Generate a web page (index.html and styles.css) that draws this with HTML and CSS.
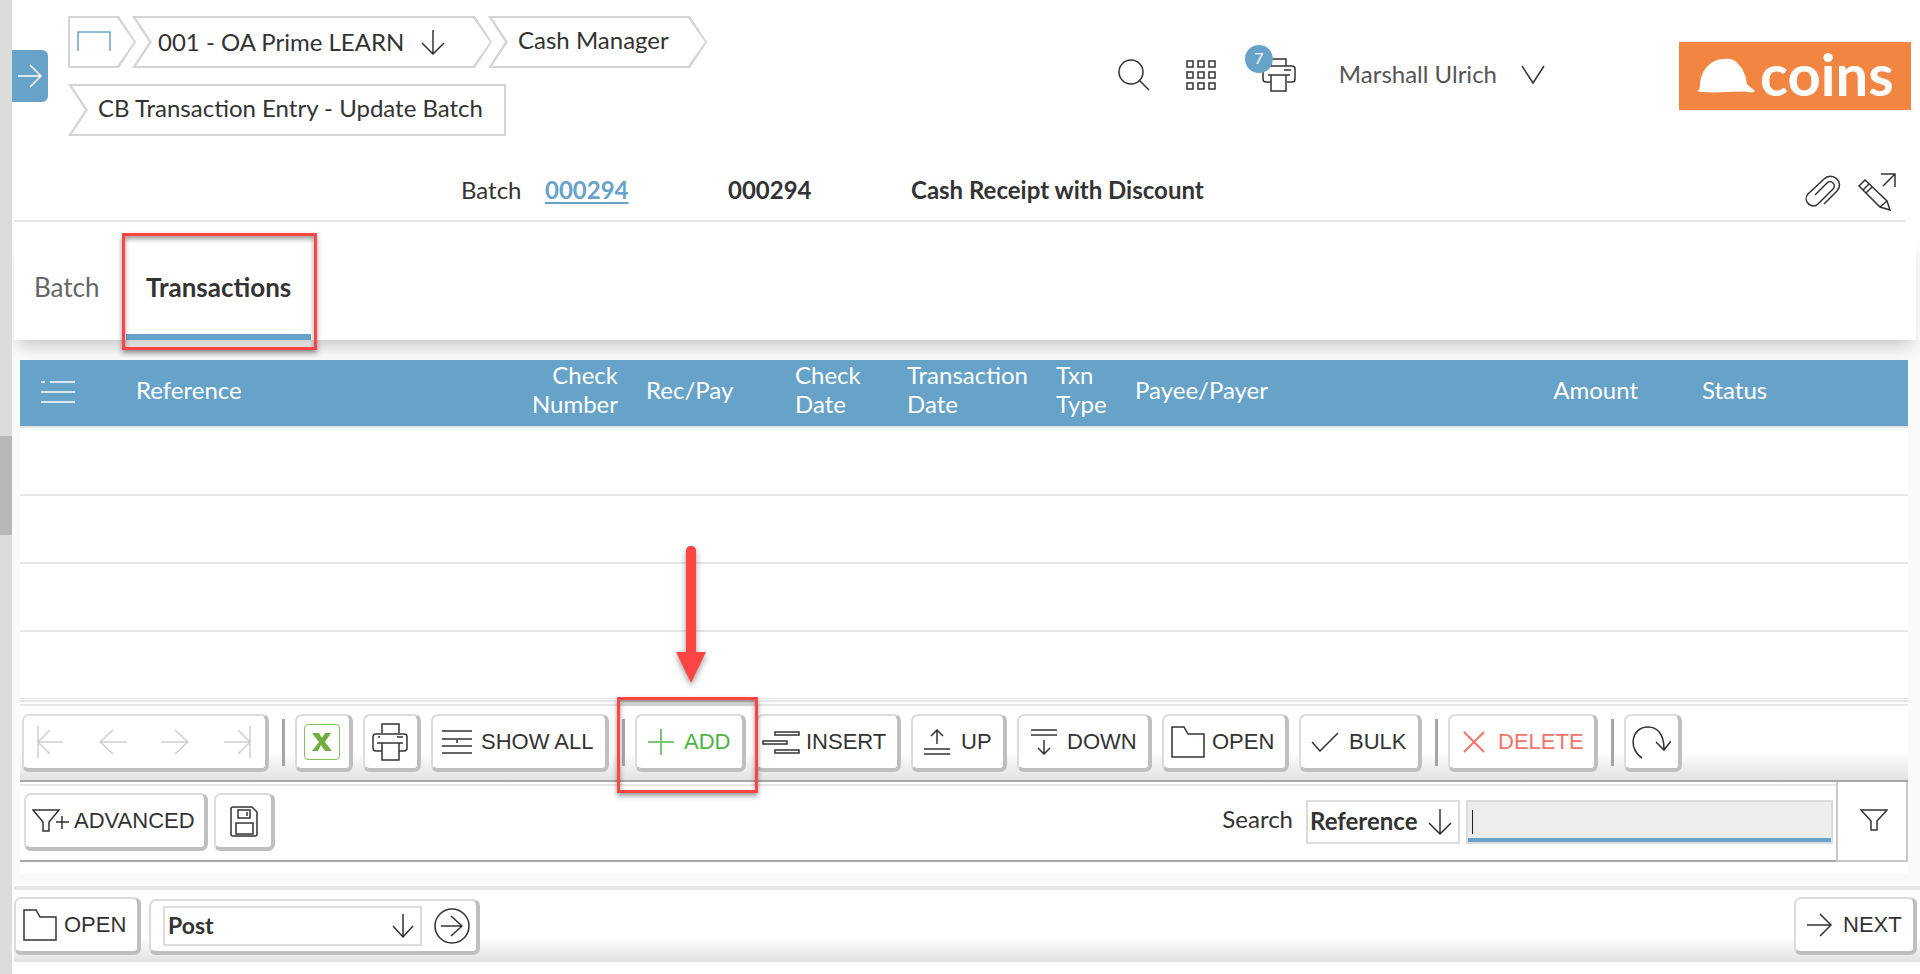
FILE: index.html
```html
<!DOCTYPE html>
<html lang="en">
<head>
<meta charset="utf-8">
<title>CB Transaction Entry - Update Batch</title>
<link rel="stylesheet" href="styles.css">
</head>
<body>
<div class="rail"><div class="rail-thumb"></div></div>
<div class="page">
  <header class="top">
    <button class="side-toggle" aria-label="Expand menu"><svg width="26" height="32" viewBox="0 0 26 32"><path d="M1 16H24M13 5L24 16L13 27"/></svg></button>
    <nav class="crumbs" aria-label="Breadcrumb">
      <a class="crumb crumb-home" href="#" aria-label="Home"><svg width="34" height="24" viewBox="0 0 34 24"><path d="M1 21V2H33V21"/></svg></a>
      <a class="crumb crumb-mid crumb-company" href="#">001 - OA Prime LEARN <svg width="24" height="26" viewBox="0 0 24 26"><path d="M12 1V25M1 14L12 25L23 14"/></svg></a>
      <a class="crumb crumb-mid crumb-module" href="#">Cash Manager</a>
      <a class="crumb crumb-last" href="#">CB Transaction Entry - Update Batch</a>
    </nav>
    <div class="tools">
      <button class="plain" aria-label="Search"><svg width="34" height="34" viewBox="0 0 34 34"><circle cx="14" cy="14" r="12"/><path d="M22 22L32 32"/></svg></button>
      <button class="plain" aria-label="Apps"><svg width="32" height="32" viewBox="0 0 32 32"><path d="M2 2h6v6h-6zM13 2h6v6h-6zM24 2h6v6h-6zM2 13h6v6h-6zM13 13h6v6h-6zM24 13h6v6h-6zM2 24h6v6h-6zM13 24h6v6h-6zM24 24h6v6h-6z"/></svg></button>
      <button class="plain printer" aria-label="Print queue"><svg width="36" height="36" viewBox="0 0 36 36"><path d="M10 9V2H25V9M10 25H5Q2 25 2 22V12Q2 9 5 9H31Q34 9 34 12V22Q34 25 31 25H26M7 18H29M10 18V34H25V18M23 13H30"/></svg><span class="badge">7</span></button>
      <button class="plain user"><span class="user-name">Marshall Ulrich</span><svg width="24" height="20" viewBox="0 0 24 20"><path d="M1 1L12 18L23 1"/></svg></button>
      <div class="logo"><svg width="58" height="36" viewBox="0 0 58 36"><path d="M0 33C2 32 3 31 3 26C4 12 14 1 27 1C33 0 39 2 41 6C44 9 45 10 46 13C49 18 49 21 50 26C52 29 57 31 58 33C56 35 53 34 48 33.500L28 34C20 34.500 6 35 0 33Z"/></svg><span>coins</span></div>
    </div>
  </header>

  <section class="summary">
    <span class="summary-label">Batch</span>
    <a class="summary-link" href="#">000294</a>
    <strong class="summary-no">000294</strong>
    <strong class="summary-desc">Cash Receipt with Discount</strong>
    <span class="summary-icons">
      <button class="plain" aria-label="Attachments"><svg width="38" height="36" viewBox="0 0 38 36"><path d="M11 21L23 9C27 5 33 11 29 15L14 30C8 36 -2 27 4 20L20 5C28 -3 41 8 33 17L20 30"/></svg></button>
      <button class="plain" aria-label="Edit"><svg width="40" height="40" viewBox="0 0 40 40"><path d="M2 14L8 8L30 29L33 38L23 35L2 14ZM6 18L12 12M9 21L15 15M23 35L30 29M26 14L38 2M24 2H38V15"/></svg></button>
    </span>
  </section>

  <nav class="tabs">
    <button class="tab">Batch</button>
    <button class="tab tab-on">Transactions<span class="mark mark-tab"></span></button>
  </nav>

  <main class="panel">
    <table class="grid">
      <colgroup><col class="c-menu"><col class="c-ref"><col class="c-num"><col class="c-rec"><col class="c-cdate"><col class="c-tdate"><col class="c-txn"><col class="c-payee"><col class="c-amt"><col class="c-status"></colgroup>
      <thead><tr>
        <th aria-label="Menu"><svg class="list-icon" width="36" height="24" viewBox="0 0 36 24"><path d="M1 2H5M10 2H35M1 12H35M1 22H35"/></svg></th>
        <th>Reference</th><th class="right">Check Number</th><th>Rec/Pay</th><th>Check Date</th><th>Transaction Date</th><th>Txn Type</th><th>Payee/Payer</th><th class="right">Amount</th><th class="status">Status</th>
      </tr></thead>
      <tbody>
        <tr><td colspan="10"></td></tr>
        <tr><td colspan="10"></td></tr>
        <tr><td colspan="10"></td></tr>
        <tr><td colspan="10"></td></tr>
      </tbody>
    </table>

    <div class="toolbar">
      <div class="btn nav-group">
        <button class="plain" aria-label="First" disabled><svg width="28" height="34" viewBox="0 0 28 34"><path d="M2 1V33M27 17H2M14 5L2 17L14 29"/></svg></button>
        <button class="plain" aria-label="Previous" disabled><svg width="28" height="34" viewBox="0 0 28 34"><path d="M28 17H1M14 5L1 17L14 29"/></svg></button>
        <button class="plain" aria-label="Next" disabled><svg width="28" height="34" viewBox="0 0 28 34"><path d="M0 17H27M14 5L27 17L14 29"/></svg></button>
        <button class="plain" aria-label="Last" disabled><svg width="28" height="34" viewBox="0 0 28 34"><path d="M26 1V33M0 17H26M14 5L26 17L14 29"/></svg></button>
      </div>
      <span class="sep"></span>
      <button class="btn icon-btn excel" aria-label="Export to Excel"><span class="excel-box"><svg width="20" height="18" viewBox="0 0 20 18"><path d="M0 0H7L10 5L13 0H19L13 9L20 18H13L9 12L6 18H0L7 9Z"/></svg></span></button>
      <button class="btn icon-btn" aria-label="Print"><svg width="36" height="38" viewBox="0 0 36 38"><path d="M10 10V1H27V10M10 28H4Q1 28 1 25V14Q1 11 4 11H32Q35 11 35 14V25Q35 28 32 28H27M5 20H31M10 20V37H27V20M25 14H31M6 14H8"/></svg></button>
      <button class="btn b-show"><svg width="30" height="26" viewBox="0 0 30 26"><path d="M0 2H30M0 10H30M0 17H30M0 24H30M15 11V14"/></svg>SHOW ALL</button>
      <span class="sep"></span>
      <button class="btn b-add"><svg width="26" height="26" viewBox="0 0 26 26"><path d="M0 13H26M13 0V26"/></svg>ADD<span class="mark mark-add"></span><svg class="pointer" width="34" height="142" viewBox="0 0 34 142"><path d="M12 5Q12 0 17 0Q22 0 22 5V106H32L17 137L2 106H12Z"/></svg></button>
      <button class="btn b-insert"><svg width="38" height="24" viewBox="0 0 38 24"><path d="M13 2H37V5H13ZM1 11H25V14H1ZM13 20H37V23H13Z"/></svg>INSERT</button>
      <button class="btn b-up"><svg width="28" height="26" viewBox="0 0 28 26"><path d="M14 15V1M8 7L14 1L20 7M1 20H27M1 25H27"/></svg>UP</button>
      <button class="btn b-down"><svg width="28" height="26" viewBox="0 0 28 26"><path d="M14 11V25M8 19L14 25L20 19M1 1H27M1 6H27"/></svg>DOWN</button>
      <button class="btn b-open"><svg width="34" height="32" viewBox="0 0 34 32"><path d="M1 1H13L17 8H33V31H1Z"/></svg>OPEN</button>
      <button class="btn b-bulk"><svg width="28" height="20" viewBox="0 0 28 20"><path d="M1 10L9 19L27 1"/></svg>BULK</button>
      <span class="sep"></span>
      <button class="btn b-delete"><svg width="22" height="22" viewBox="0 0 22 22"><path d="M1 1L21 21M21 1L1 21"/></svg>DELETE</button>
      <span class="sep"></span>
      <button class="btn icon-btn" aria-label="Refresh"><svg width="40" height="34" viewBox="0 0 40 34"><path d="M11 33C-3 24 0 2 17 2C27 2 33 10 33 24M25 17L33 25L40 16"/></svg></button>
    </div>

    <div class="filter-row">
      <div class="filter-main">
        <button class="btn b-adv"><svg width="37" height="24" viewBox="0 0 37 24"><path d="M1 1H27L17 13V22H11V13ZM24 13H37M30 7V20"/></svg>ADVANCED</button>
        <button class="btn b-save" aria-label="Save"><svg width="28" height="31" viewBox="0 0 28 31"><path d="M3 1H22L27 6V28Q27 30 25 30H3Q1 30 1 28V3Q1 1 3 1ZM8 4H20V12H8ZM17 6V10M6 17H23V28H6Z"/></svg></button>
        <label class="search-label" for="field">Search</label>
        <span class="select-wrap"><select id="field" class="field-select"><option>Reference</option></select><svg width="24" height="26" viewBox="0 0 24 26"><path d="M12 0V25M1 14L12 25L23 14"/></svg></span>
        <span class="search-box"><input class="search-input" type="text" aria-label="Search text"><span class="caret"></span></span>
      </div>
      <button class="filter-btn" aria-label="Filter"><svg width="28" height="22" viewBox="0 0 28 22"><path d="M1 1H27L17 12V21H11V12Z"/></svg></button>
    </div>
    <div class="panel-end"></div>
  </main>

  <footer class="footer">
    <button class="btn b-open"><svg width="34" height="32" viewBox="0 0 34 32"><path d="M1 1H13L17 8H33V31H1Z"/></svg>OPEN</button>
    <div class="btn action-group">
      <span class="select-wrap"><select class="action-select" aria-label="Action"><option>Post</option></select><svg width="22" height="24" viewBox="0 0 22 24"><path d="M11 0V23M1 12L11 23L21 12"/></svg></span>
      <button class="plain" aria-label="Go"><svg width="38" height="38" viewBox="0 0 38 38"><circle cx="19" cy="19" r="17"/><path d="M8 19H29M18 9L29 19L18 29"/></svg></button>
    </div>
    <button class="btn b-next"><svg width="26" height="24" viewBox="0 0 26 24"><path d="M0 12H24M13 1L24 12L13 23"/></svg>NEXT</button>
  </footer>
</div>
</body>
</html>
```
FILE: styles.css
```css
* { box-sizing: border-box; }
body {
  margin: 0;
  min-height: 100vh;
  display: flex;
  font-family: Lato, Carlito, sans-serif;
  font-size: 24px;
  line-height: 28px;
  color: #333;
  background: #fff;
}
svg { fill: none; stroke: #333; stroke-width: 1.5; flex: none; }
button, select, input { font: inherit; color: inherit; margin: 0; }
a { color: inherit; text-decoration: none; }
.plain { border: 0; padding: 0; background: none; display: flex; align-items: center; }

.rail { width: 12px; flex: none; background: #dcdcdc; padding-top: 436px; }
.rail-thumb { height: 99px; background: #b8b8b8; }
.page { flex: 1; min-width: 0; display: flex; flex-direction: column; }

.top { display: flex; align-items: flex-start; height: 152px; }
.side-toggle {
  width: 36px; height: 52px; margin-top: 50px; padding: 0;
  border: 0; border-radius: 0 6px 6px 0; background: #67a2c8;
  display: flex; align-items: center; justify-content: center;
}
.side-toggle svg { stroke: #fff; }
.crumbs { width: 680px; margin: 16px 0 0 20px; display: flex; flex-wrap: wrap; row-gap: 16px; }
.crumb {
  position: relative; height: 52px; margin-right: -4px;
  display: flex; align-items: center; background: #d4d4d4; isolation: isolate;
}
.crumb::before { content: ""; position: absolute; inset: 2px; background: #fff; z-index: -1; }
.crumb-home { width: 68px; padding-left: 9px; }
.crumb-home svg { stroke: #67a2c8; }
.crumb-home, .crumb-home::before { clip-path: polygon(0 0, calc(100% - 17px) 0, 100% 50%, calc(100% - 17px) 100%, 0 100%); }
.crumb-mid { clip-path: polygon(0 0, calc(100% - 17px) 0, 100% 50%, calc(100% - 17px) 100%, 0 100%, 17px 50%); }
.crumb-mid::before { clip-path: polygon(2px 0, calc(100% - 17px) 0, 100% 50%, calc(100% - 17px) 100%, 2px 100%, 18px 50%); }
.crumb-last { clip-path: polygon(0 0, 100% 0, 100% 100%, 0 100%, 17px 50%); }
.crumb-last::before { clip-path: polygon(2px 0, 100% 0, 100% 100%, 2px 100%, 18px 50%); }
.crumb-company { width: 360px; padding-left: 26px; gap: 17px; }
.crumb-module { width: 219px; padding-left: 30px; padding-bottom: 4px; }
.crumb-last { width: 438px; padding-left: 30px; padding-bottom: 4px; }

.tools { margin-left: auto; padding: 42px 9px 0 0; display: flex; align-items: center; color: #555; }
.tools > .plain { margin-right: 34px; padding-bottom: 2px; }
.tools > .printer { position: relative; margin-left: 10px; }
.badge {
  position: absolute; left: -16px; top: -12px; width: 28px; height: 28px;
  border-radius: 50%; background: #67a2c8; color: #fff;
  font-size: 16px; line-height: 26px; text-align: center;
}
.tools > .user { gap: 24px; margin: 0 134px 0 8px; }
.user-name { padding-bottom: 2px; }
.logo { width: 232px; height: 68px; padding-left: 18px; background: #f38542; color: #fff; display: flex; align-items: center; gap: 5px; }
.logo svg { fill: #fff; stroke: none; }
.logo span { font-size: 58px; line-height: 60px; font-weight: 700; padding-bottom: 4px; }

.summary { margin: 0 15px 0 2px; height: 70px; border-bottom: 2px solid #e6e6e6; display: flex; align-items: center; padding-left: 447px; padding-top: 8px; }
.summary-label { width: 84px; }
.summary-link { width: 183px; font-weight: 700; color: #67a2c8; text-decoration: underline; text-underline-offset: 3px; }
.summary-no { width: 183px; }
.summary-icons { margin-left: auto; display: flex; gap: 15px; padding: 4px 8px 0 0; }

.tabs { position: relative; z-index: 1; background: #fff; display: flex; height: 104px; margin: 14px 4px 0 2px; box-shadow: 0 10px 16px -4px rgba(0,0,0,.2); clip-path: inset(-8px -4px -20px -2px); }
.tab { border: 0; background: none; font-size: 26px; color: #666; padding: 0 20px 2px; width: 112px; text-align: left; }
.tab-on { position: relative; width: 185px; color: #333; font-weight: 700; border-bottom: 6px solid #67a2c8; padding-top: 6px; }
.mark { position: absolute; border: 3px solid #ff4444; box-shadow: 0 3px 5px rgba(0,0,0,.4), inset 0 3px 5px rgba(0,0,0,.4); pointer-events: none; z-index: 2; }
.mark-tab { left: -4px; right: -6px; top: -3px; bottom: -16px; }

.panel { padding: 20px 12px 12px 8px; background: #fafafa; }
.panel-end { height: 12px; background: #fff; }
.grid { width: 100%; border-collapse: separate; border-spacing: 0; table-layout: fixed; background: #fff; }
.grid thead { background: #67a2c8; color: #fff; }
.grid th { height: 66px; padding: 0 14px 8px; font-weight: 400; text-align: left; line-height: 29px; }
.grid th.right { text-align: right; }
.grid th.status { padding-left: 50px; }
.grid td { height: 68px; padding: 0; border-top: 2px solid #e6e6e6; }
.list-icon { stroke: #fff; margin: 6px 0 0 6px; display: block; }
.c-menu { width: 102px; } .c-ref { width: 369px; } .c-num { width: 141px; } .c-rec { width: 149px; }
.c-cdate { width: 112px; } .c-tdate { width: 149px; } .c-txn { width: 79px; } .c-amt { width: 152px; } .c-status { width: 256px; }

.btn {
  height: 58px; border: 2px solid #dcdcdc; border-right: 4px solid #bfbfbf; border-bottom: 4px solid #bfbfbf;
  border-radius: 7px; background: #fff; padding: 0; flex: none; white-space: nowrap;
  display: flex; align-items: center; font-family: "Liberation Sans", Arial, sans-serif; font-size: 22px;
}
.toolbar {
  display: flex; align-items: center; gap: 10px; padding: 14px 2px 8px; height: 84px;
  border-top: 1px solid #e6e6e6; border-bottom: 2px solid #a6a6a6;
  background:
    linear-gradient(#e6e6e6, #e6e6e6) 0 1px / 100% 2px no-repeat,
    linear-gradient(#e6e6e6, #e6e6e6) 0 5px / 100% 2px no-repeat,
    linear-gradient(#fff 65%, #e2e2e2);
}
.sep { width: 3px; height: 47px; background: #a6a6a6; margin-left: 3px; }
.nav-group { width: 247px; padding: 0 13px 0 12px; justify-content: space-between; }
.nav-group svg { stroke: #d0d0d0; }
.icon-btn { width: 58px; padding-right: 3px; justify-content: center; }
.excel-box { width: 36px; height: 36px; border: 1px solid #84bf5a; border-radius: 4px; display: flex; align-items: center; justify-content: center; }
.excel-box svg { fill: #70ad3f; stroke: none; }
.b-show { width: 178px; padding-left: 9px; gap: 9px; }
.b-add { position: relative; width: 111px; padding-left: 11px; gap: 10px; color: #4db445; }
.b-add svg { stroke: #7cc576; stroke-width: 2; }
.mark-add { left: -20px; right: -16px; top: -19px; bottom: -25px; }
.b-add .pointer { position: absolute; left: 37px; top: -170px; fill: #ff4444; stroke: none; filter: drop-shadow(0 3px 3px rgba(0,0,0,.4)); z-index: 2; }
.b-insert { width: 145px; padding-left: 4px; gap: 6px; }
.b-up { width: 96px; padding-left: 10px; gap: 10px; }
.b-down { width: 135px; padding-left: 11px; gap: 9px; }
.b-open { width: 127px; padding-left: 7px; gap: 7px; }
.b-bulk { width: 123px; padding-left: 10px; gap: 10px; }
.b-delete { width: 150px; padding-left: 13px; gap: 13px; color: #f4736b; }
.b-delete svg { stroke: #f4736b; stroke-width: 2; }

.filter-row { display: flex; height: 80px; background: #fff; }
.filter-main {
  flex: 1; display: flex; align-items: center; border-bottom: 2px solid #a6a6a6; padding: 2px 3px 0 4px;
  background: linear-gradient(#e6e6e6, #e6e6e6) 0 2px / 100% 2px no-repeat;
}
.b-adv { width: 184px; padding-left: 6px; gap: 5px; }
.b-save { width: 61px; margin-left: 6px; justify-content: center; }
.search-label { margin-left: auto; margin-right: 13px; padding-bottom: 6px; }
.select-wrap { position: relative; display: flex; align-items: center; }
.select-wrap svg { position: absolute; right: 8px; pointer-events: none; }
.select-wrap select { appearance: none; border: 2px solid #dcdcdc; border-radius: 0; background: #fff; padding: 0 2px 2px; font-family: Lato, Carlito, sans-serif; font-size: 24px; font-weight: 700; }
.field-select { width: 154px; height: 44px; }
.select-wrap .action-select { width: 259px; height: 40px; font-size: 23px; padding: 0 3px 2px; }
.search-box { position: relative; width: 367px; margin-left: 6px; }
.search-input { display: block; width: 100%; height: 44px; border: 2px solid #dcdcdc; background: #ededed; box-shadow: inset 0 -4px #67a2c8; padding: 0 6px; outline: 0; }
.caret { position: absolute; left: 6px; top: 10px; width: 1px; height: 24px; background: #222; }
.filter-btn { width: 72px; padding: 0 0 2px 4px; border: 2px solid #c8c8c8; border-top: 0; background: #fff; display: flex; align-items: center; justify-content: center; }

.footer { display: flex; align-items: flex-start; height: 76px; border-top: 4px solid #e6e6e6; margin: 0 0 0 2px; padding: 7px 3px 0 0; background: linear-gradient(#fff 65%, #e2e2e2); }
.action-group { width: 331px; height: 56px; margin: 2px 0 0 8px; padding: 0 5px 0 12px; justify-content: space-between; }
.b-next { width: 123px; margin-left: auto; padding-left: 11px; gap: 10px; }
```
